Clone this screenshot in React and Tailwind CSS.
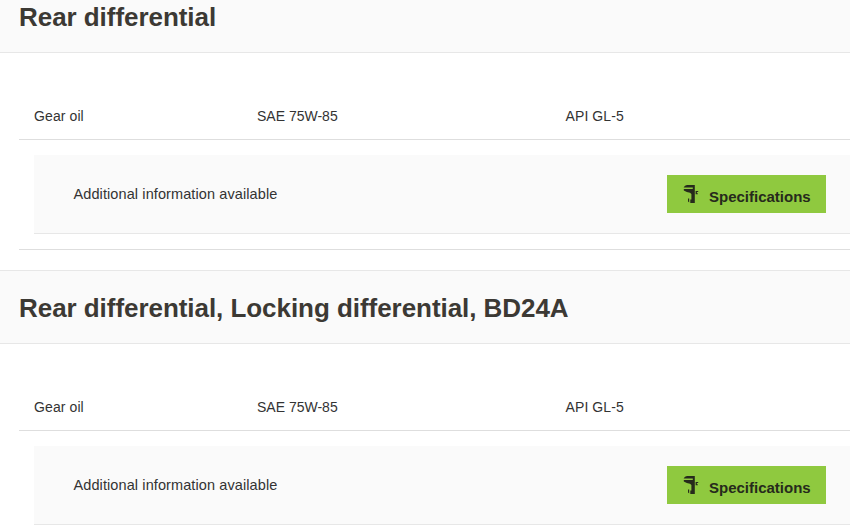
import React from 'react'

const sections = [
  { id: 1, title: 'Rear differential', oil: 'Gear oil', grade: 'SAE 75W-85', spec: 'API GL-5' },
  { id: 2, title: 'Rear differential, Locking differential, BD24A', oil: 'Gear oil', grade: 'SAE 75W-85', spec: 'API GL-5' },
]

function CaliperIcon() {
  return (
    <svg width="16" height="20" viewBox="0 0 16 20" fill="#262a1c" className="shrink-0">
      <path d="M0.6 3.4 L2 1.8 L4 1 H11.8 V19 H7.3 V15.4 H8.4 V10 L7 8.8 L3.8 8 L0.8 6.4 V5 H9.8 V3.6 H0.6 Z" />
      <path d="M5 14.6 H6.2 V18.6 L5 17.4 Z" />
      <path d="M12.6 7 H15.2 V8 H13.9 V9.2 H14.8 V10.2 H12.6 Z" />
    </svg>
  )
}

function Section({ section }) {
  return (
    <section>
      <div className="h-[74px] shrink-0 bg-[#fafafa] border-y border-[#e7e7e7] pl-[19px] flex items-center">
        <h2 className="text-[26px] leading-[30px] tracking-[-0.05px] font-bold text-[#3c3934] whitespace-nowrap pt-[2px]">{section.title}</h2>
      </div>

      <div className="pl-[19px] pt-10 pb-5">
        <div className="h-[47px] border-b border-[#dedede] pl-[15px] pt-[13px] flex leading-5">
          <span className="w-[223px] tracking-[0.1px]">{section.oil}</span>
          <span className="w-[308.5px]">{section.grade}</span>
          <span className="tracking-[0.1px]">{section.spec}</span>
        </div>

        <div className="border-b border-[#dedede] pl-[15px] py-[15px]">
          <div className="h-[79px] bg-[#fafafa] border-b border-[#e7e7e7] pl-[39.5px] pr-6 flex items-center justify-between">
            <span className="text-[14.5px] leading-5 tracking-[0.1px]">Additional information available</span>
            <button className="w-[159px] h-[38px] bg-[#8fc93f] pl-4 flex items-start text-[15px] leading-5 font-bold text-[#262a1c]">
              <span className="pt-[9px]"><CaliperIcon /></span>
              <span className="pl-[10px] pt-3">Specifications</span>
            </button>
          </div>
        </div>
      </div>
    </section>
  )
}

function App() {
  return (
    <div className="h-screen overflow-hidden bg-white font-['Liberation_Sans',Arial,sans-serif] text-[14px] text-[#333333]">
      <div className="-mt-[21px]">
        {sections.map((section) => (
          <Section key={section.id} section={section} />
        ))}
      </div>
    </div>
  )
}

export default App
